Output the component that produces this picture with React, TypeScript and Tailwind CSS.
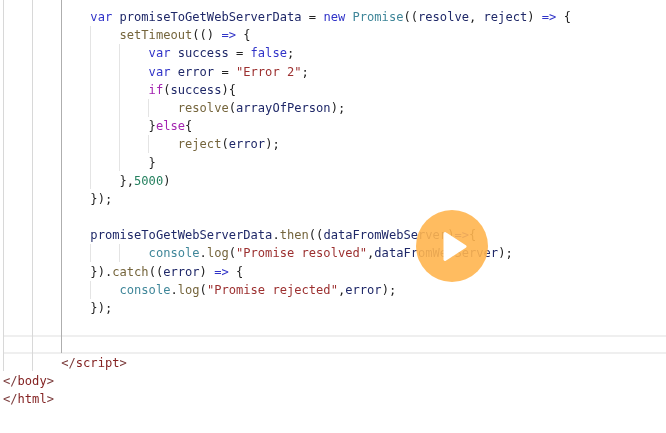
type Token = [string, string];

const kw = 'text-[#3033c8]';
const id = 'text-[#1f2868]';
const fn = 'text-[#75653c]';
const str = 'text-[#9c3030]';
const cls = 'text-[#3f8699]';
const num = 'text-[#25805f]';
const pun = 'text-[#222222]';
const ctl = 'text-[#a324b0]';
const tag = 'text-[#842222]';
const br = 'text-[#7a3a3a]';

const lines: Token[][] = [
    [[kw, '            var '], [id, 'promiseToGetWebServerData'], [pun, ' = '], [kw, 'new '], [cls, 'Promise'], [pun, '(('], [id, 'resolve'], [pun, ', '], [id, 'reject'], [pun, ') '], [kw, '=>'], [pun, ' {']],
    [[fn, '                setTimeout'], [pun, '(() '], [kw, '=>'], [pun, ' {']],
    [[kw, '                    var '], [id, 'success'], [pun, ' = '], [kw, 'false'], [pun, ';']],
    [[kw, '                    var '], [id, 'error'], [pun, ' = '], [str, '"Error 2"'], [pun, ';']],
    [[ctl, '                    if'], [pun, '('], [id, 'success'], [pun, '){']],
    [[fn, '                        resolve'], [pun, '('], [id, 'arrayOfPerson'], [pun, ');']],
    [[pun, '                    }'], [ctl, 'else'], [pun, '{']],
    [[fn, '                        reject'], [pun, '('], [id, 'error'], [pun, ');']],
    [[pun, '                    }']],
    [[pun, '                },'], [num, '5000'], [pun, ')']],
    [[pun, '            });']],
    [],
    [[id, '            promiseToGetWebServerData'], [pun, '.'], [fn, 'then'], [pun, '(('], [id, 'dataFromWebServer'], [pun, ')'], [kw, '=>'], [pun, '{']],
    [[cls, '                    console'], [pun, '.'], [fn, 'log'], [pun, '('], [str, '"Promise resolved"'], [pun, ','], [id, 'dataFromWebServer'], [pun, ');']],
    [[pun, '            }).'], [fn, 'catch'], [pun, '(('], [id, 'error'], [pun, ') '], [kw, '=>'], [pun, ' {']],
    [[cls, '                console'], [pun, '.'], [fn, 'log'], [pun, '('], [str, '"Promise rejected"'], [pun, ','], [id, 'error'], [pun, ');']],
    [[pun, '            });']],
    [],
    [],
    [[br, '        </'], [tag, 'script'], [br, '>']],
    [[br, '</'], [tag, 'body'], [br, '>']],
    [[br, '</'], [tag, 'html'], [br, '>']],
];

// indent guides drawn over the code
const guides = [
    'left-[3px] top-0 h-[371px] bg-[#d8d8d8]',
    'left-[32px] top-0 h-[371px] bg-[#d8d8d8]',
    'left-[61px] top-0 h-[353px] bg-[#aeaeae]',
    'left-[90px] top-[26px] h-[163px] bg-[#e4e4e4]',
    'left-[119px] top-[44px] h-[127px] bg-[#e4e4e4]',
    'left-[148px] top-[99px] h-[18px] bg-[#e4e4e4]',
    'left-[148px] top-[135px] h-[18px] bg-[#e4e4e4]',
    'left-[90px] top-[244px] h-[18px] bg-[#e4e4e4]',
    'left-[119px] top-[244px] h-[18px] bg-[#e4e4e4]',
    'left-[90px] top-[281px] h-[18px] bg-[#e4e4e4]',
];

const App = () => {
    return (
        <div className="relative w-[666px] h-[433px] overflow-hidden bg-white">
            <div className="flex flex-col pt-2 pl-[3px] font-['DejaVu_Sans_Mono',monospace] text-[12.1px] leading-[18.2px] blur-[0.3px]">
                {lines.map((line, i) => (
                    <div
                        key={i}
                        className={
                            i === 18
                                ? 'h-[18.2px] whitespace-pre shadow-[inset_0_2px_0_#efefef,inset_0_-2px_0_#efefef]'
                                : 'h-[18.2px] whitespace-pre'
                        }
                    >
                        {line.map(([color, text], j) => (
                            <span key={j} className={color}>
                                {text}
                            </span>
                        ))}
                    </div>
                ))}
            </div>

            {guides.map((g) => (
                <div key={g} className={`absolute w-px ${g}`} />
            ))}

            <div className="absolute left-[416px] top-[210px] flex items-center justify-center w-[72px] h-[72px] rounded-full bg-[#ffb54f]/90">
                <svg width="24" height="31" viewBox="0 0 24 31" className="ml-[5px]">
                    <path d="M2 2.5 L22 15.5 L2 28.5 Z" fill="#fff" stroke="#fff" strokeWidth="3" strokeLinejoin="round" />
                </svg>
            </div>
        </div>
    );
};

export default App;
